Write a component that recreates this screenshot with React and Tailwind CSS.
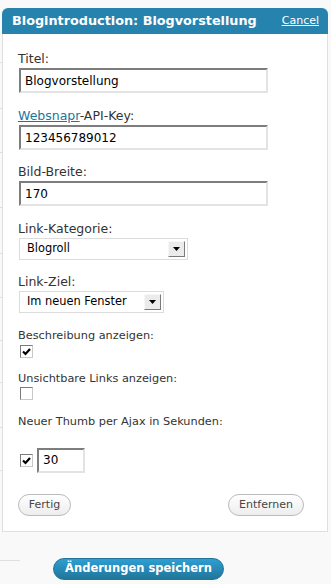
const Check = () => (
  <svg width="9" height="8" viewBox="0 0 9 8" className="block">
    <path d="M1 3.5 L3.5 6 L8 1" stroke="#000" strokeWidth="2.2" fill="none" />
  </svg>
);

const Checkbox = ({ checked }) => (
  <div className="w-[13px] h-[13px] ml-[2px] border border-t-[#7b7b7b] border-l-[#7b7b7b] border-b-[#c9c9c9] border-r-[#c9c9c9] bg-white flex items-center justify-center">
    {checked && <Check />}
  </div>
);

const TextInput = ({ value, w = "w-[249px]" }) => (
  <div className={`${w} h-[25px] ml-[1px] border-2 border-t-[#7d7d7d] border-l-[#7d7d7d] border-b-[#e3e3e3] border-r-[#e3e3e3] bg-white flex items-center pl-[4px] text-[12px] text-black`}>
    {value}
  </div>
);

const Select = ({ value, w }) => (
  <div className={`${w} h-[22px] ml-[1px] border border-[#dcdcdc] bg-white flex items-center justify-between pl-[7px] pr-[2px] text-[11.4px] text-black`}>
    <span>{value}</span>
    <div className="w-[17px] h-[16px] bg-[#ebebeb] border border-t-[#f7f7f7] border-l-[#f7f7f7] border-b-[#7a7a7a] border-r-[#7a7a7a] flex items-center justify-center">
      <svg width="7" height="4" viewBox="0 0 7 4" className="block">
        <path d="M0 0 H7 L3.5 4 Z" fill="#000" />
      </svg>
    </div>
  </div>
);

const Label = ({ children }) => (
  <div className="text-[12.5px] leading-[15px] text-[#333] mb-[2px]">{children}</div>
);

export default function App() {
  const lines = [62, 108, 152, 207, 253, 297, 340, 382, 427, 470];
  return (
    <div className="w-[331px] h-[584px] bg-[#f9f9f9] overflow-hidden font-['DejaVu_Sans',sans-serif]">
      <div className="flex pt-[8px]">
        <div className="w-[2px] relative">
          {lines.map((y) => (
            <div key={y} className="absolute left-0 w-[2px] h-px bg-[#dfdfdf]" style={{ top: y - 8 }} />
          ))}
        </div>
        <div className="w-[326px]">
          <div className="h-[26px] bg-[#2683ae] rounded-t-[6px] flex items-center justify-between pl-[10px] pr-[9px]">
            <span className="text-white font-bold text-[12.8px]">Blogintroduction: Blogvorstellung</span>
            <span className="text-white underline text-[11px]">Cancel</span>
          </div>
          <div className="bg-white border-x border-b border-[#dfdfdf] pt-[17px] pl-[15px] pr-[23px] pb-[15px]">
            <div className="flex flex-col">
              <div>
                <Label>Titel:</Label>
                <TextInput value="Blogvorstellung" />
              </div>
              <div className="mt-[15px]">
                <Label>
                  <span className="text-[#21759b] underline">Websnapr</span>-API-Key:
                </Label>
                <TextInput value="123456789012" />
              </div>
              <div className="mt-[14px]">
                <Label>Bild-Breite:</Label>
                <TextInput value="170" />
              </div>
              <div className="mt-[15px]">
                <Label>Link-Kategorie:</Label>
                <Select value="Blogroll" w="w-[169px]" />
              </div>
              <div className="mt-[14px]">
                <Label>Link-Ziel:</Label>
                <Select value="Im neuen Fenster" w="w-[145px]" />
              </div>
              <div className="mt-[16px] text-[11.3px] leading-[13px] text-[#333]">
                <div>Beschreibung anzeigen:</div>
                <div className="mt-[3px]">
                  <Checkbox checked />
                </div>
                <div className="mt-[14px]">Unsichtbare Links anzeigen:</div>
                <div className="mt-[2px]">
                  <Checkbox />
                </div>
                <div className="mt-[15px]">Neuer Thumb per Ajax in Sekunden:</div>
                <div className="mt-[20px] flex items-center">
                  <Checkbox checked />
                  <div className="ml-[3px]">
                    <TextInput value="30" w="w-[48px]" />
                  </div>
                </div>
              </div>
              <div className="mt-[21px] flex justify-between">
                <div className="w-[53px] h-[22px] rounded-full border border-[#bbbbbb] bg-gradient-to-b from-white to-[#ededed] flex items-center justify-center text-[11px] text-[#464646]">
                  Fertig
                </div>
                <div className="w-[76px] h-[22px] rounded-full border border-[#bbbbbb] bg-gradient-to-b from-white to-[#ededed] flex items-center justify-center text-[11px] text-[#464646]">
                  Entfernen
                </div>
              </div>
            </div>
          </div>
        </div>
      </div>
      <div className="flex items-start mt-[26px]">
        <div className="w-[20px] h-px bg-[#dfdfdf] mt-[2px]" />
        <div className="ml-[33px] w-[171px] h-[22px] rounded-full border border-[#21759b] bg-gradient-to-b from-[#2e9fd2] to-[#21759b] flex items-center justify-center text-white font-bold text-[11.5px]">
          Änderungen speichern
        </div>
      </div>
    </div>
  );
}
